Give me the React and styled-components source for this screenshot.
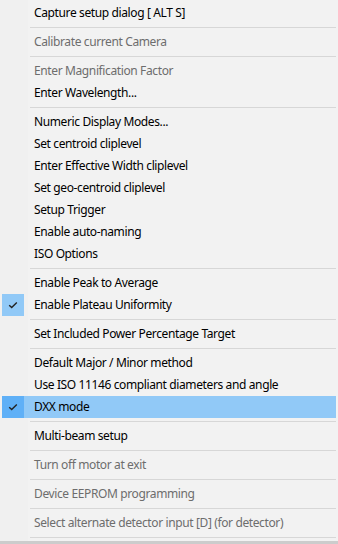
import React from 'react';
import styled, { createGlobalStyle } from 'styled-components';

const GlobalStyle = createGlobalStyle`
  html, body {
    margin: 0;
    padding: 0;
    background: #f2f2f2;
  }
  body {
    font-family: "Noto Sans", "Open Sans", sans-serif;
  }
`;

const Menu = styled.div`
  width: 338px;
  height: 544px;
  box-sizing: border-box;
  padding: 2px 2px 0 2px;
  background: linear-gradient(to right, #f0f0f0 0, #f0f0f0 28px, #f2f2f2 28px);
  border-bottom: 3px solid #cccccc;
  display: flex;
  flex-direction: column;
  overflow: hidden;
`;

const Item = styled.div`
  height: 22px;
  display: flex;
  align-items: center;
  background: ${p => (p.$active ? '#91c9f7' : 'transparent')};
  color: ${p => (p.$disabled ? '#6d6d6d' : '#000000')};
  font-size: 12px;
  letter-spacing: -0.38px;
  white-space: nowrap;
`;

const CheckCell = styled.div`
  width: 22px;
  height: 22px;
  flex: 0 0 22px;
  display: flex;
  align-items: center;
  justify-content: center;
  background: ${p => (!p.$checked ? 'transparent' : p.$active ? '#5fb0f7' : '#91c9f7')};
`;

const Label = styled.span`
  padding-left: 10px;
  line-height: 22px;
`;

const Separator = styled.div`
  height: 7px;
  flex: 0 0 7px;
  display: flex;
  flex-direction: column;
  padding-left: 28px;
  &::before {
    content: '';
    margin-top: 3px;
    height: 1px;
    background: #d7d7d7;
  }
`;

const Check = () => (
  <svg width="10" height="8" viewBox="0 0 10 8">
    <path d="M1.2 4.2 L3.7 6.5 L8.8 1.4" fill="none" stroke="#222" strokeWidth="1.4" />
  </svg>
);

const menu = [
  { label: 'Capture setup dialog [ ALT S]' },
  '-',
  { label: 'Calibrate current Camera', disabled: true },
  '-',
  { label: 'Enter Magnification Factor', disabled: true },
  { label: 'Enter Wavelength...' },
  '-',
  { label: 'Numeric Display Modes...' },
  { label: 'Set centroid cliplevel' },
  { label: 'Enter Effective Width cliplevel' },
  { label: 'Set geo-centroid cliplevel' },
  { label: 'Setup Trigger' },
  { label: 'Enable auto-naming' },
  { label: 'ISO Options' },
  '-',
  { label: 'Enable Peak to Average' },
  { label: 'Enable Plateau Uniformity', checked: true },
  '-',
  { label: 'Set Included Power Percentage Target' },
  '-',
  { label: 'Default Major / Minor method' },
  { label: 'Use ISO 11146 compliant diameters and angle' },
  { label: 'DXX mode', checked: true, active: true },
  '-',
  { label: 'Multi-beam setup' },
  '-',
  { label: 'Turn off motor at exit', disabled: true },
  '-',
  { label: 'Device EEPROM programming', disabled: true },
  '-',
  { label: 'Select alternate detector input [D] (for detector)', disabled: true },
  '-',
];

export default function App() {
  return (
    <>
      <GlobalStyle />
      <Menu>
        {menu.map((m, i) =>
          m === '-' ? (
            <Separator key={i} />
          ) : (
            <Item key={i} $active={m.active} $disabled={m.disabled}>
              <CheckCell $checked={m.checked} $active={m.active}>
                {m.checked && <Check />}
              </CheckCell>
              <Label>{m.label}</Label>
            </Item>
          )
        )}
      </Menu>
    </>
  );
}
